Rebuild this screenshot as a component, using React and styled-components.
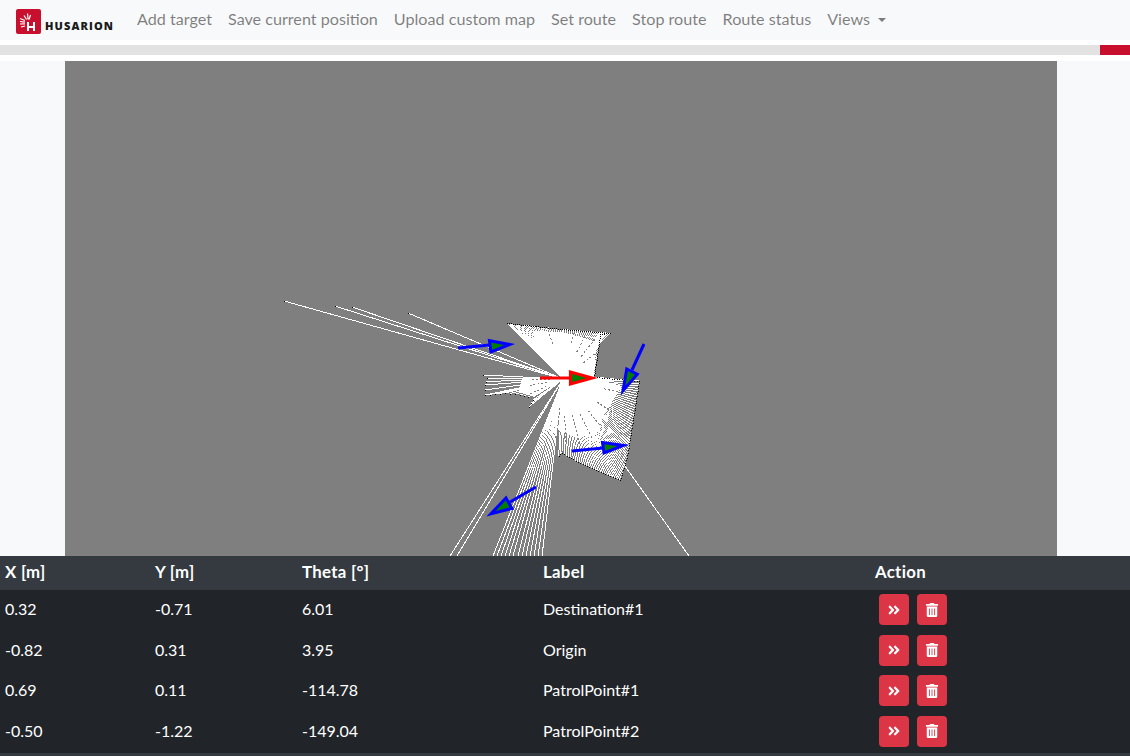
import React from "react";
import styled, { createGlobalStyle } from "styled-components";
import { FaAngleDoubleRight, FaTrashAlt } from "react-icons/fa";

const GlobalStyle = createGlobalStyle`
  html, body {
    margin: 0;
    height: 756px;
    overflow: hidden;
    background: #fff;
    font-family: Lato, "Liberation Sans", sans-serif;
    font-size: 16px;
  }
`;

const Navbar = styled.nav`
  display: flex;
  align-items: center;
  height: 40px;
  padding: 0 8px 2px 16px;
  box-sizing: border-box;
  background: #f8f9fa;
`;
const Brand = styled.a`
  display: flex;
  align-items: flex-end;
  flex: none;
  width: 97px;
  height: 25px;
  margin-right: 16px;
  margin-top: 4px;
`;
const LogoMark = styled.svg`
  flex: none;
  width: 25px;
  height: 25px;
`;
const BrandName = styled.span`
  margin: 0 0 2px 4px;
  font-family: "Open Sans", sans-serif;
  font-weight: 800;
  font-size: 11px;
  line-height: 12px;
  letter-spacing: 1.1px;
  color: #1b1b1b;
`;
const NavItem = styled.a`
  padding: 0 8px;
  font-size: 16.15px;
  line-height: 24px;
  white-space: nowrap;
  color: rgba(0, 0, 0, 0.5);
`;
const Caret = styled.span`
  display: inline-block;
  margin-left: 8px;
  vertical-align: 3px;
  border-top: 4.8px solid;
  border-left: 4.8px solid transparent;
  border-right: 4.8px solid transparent;
`;
const Progress = styled.div`
  display: flex;
  justify-content: flex-end;
  height: 10px;
  margin: 5px 0 6px;
  background: #e2e2e2;
`;
const ProgressValue = styled.div`
  width: 30px;
  background: #c8102e;
`;
const MapArea = styled.div`
  display: flex;
  justify-content: center;
  padding-right: 8px;
  background: #f8f9fa;
`;
const MapCanvas = styled.svg`
  display: block;
  width: 992px;
  height: 495px;
  background: #7f7f7f;
`;
const TableWrap = styled.div`
  height: 200px;
  background: #343a40;
`;
const Table = styled.table`
  width: 1130px;
  table-layout: fixed;
  border-collapse: collapse;
  color: #fff;
`;
const HeadCell = styled.th`
  height: 34px;
  padding: 0 5px 4px;
  box-sizing: border-box;
  text-align: left;
  font-size: 16.8px;
  font-weight: 700;
  letter-spacing: 0.3px;
  background: #343a40;
`;
const Row = styled.tr`
  background: #212529;
`;
const Cell = styled.td`
  height: 40.67px;
  padding: 7px 5px 0;
  box-sizing: border-box;
  vertical-align: top;
  line-height: 24px;
`;
const Actions = styled.div`
  display: flex;
  gap: 8px;
  margin: -3px 0 0 4px;
`;
const RedButton = styled.button`
  display: flex;
  align-items: center;
  justify-content: center;
  width: 30px;
  height: 31px;
  padding: 0;
  border: 0;
  border-radius: 4px;
  background: #dc3545;
  color: #fff;
  font-size: 14px;
`;

const ORIGIN = [563, 379];

// outline of what the scan has reached, walked clockwise
const TOP_OUTLINE = [
  [507, 323], [562, 329], [610, 333], [600, 334], [598, 350], [594, 377],
];
const RIGHT_OUTLINE = [
  [594, 377], [639, 381], [633, 420], [627, 458], [620, 480], [603, 473],
  [578, 462], [562, 453], [557, 457],
];
const LEFT_OUTLINE = [
  [483, 375], [487, 378], [485, 385], [485, 395], [505, 393], [520, 395],
  [528, 397], [533, 400], [527, 410],
];
const LONG_RAYS = [
  [284, 301], [335, 306], [352, 307], [408, 313], [689, 556],
  [450, 556], [457, 556],
  [493, 556], [497, 556], [501, 556], [505, 556], [509, 556], [513, 556],
  [518, 556], [522, 556], [526, 556], [530, 556], [534, 556], [538, 556], [542, 556],
];
const SOLID_AREAS = [
  "563,379 532,331 562,332 585,338 596,345 594,379",
  "563,379 596,379 622,386 612,402 598,425 578,438 558,430",
  "563,379 522,378 519,392 534,397",
];
// missed beams: dotted grey lines that cut through the white, from the given
// share of the way out to the end point
const MISSED_BEAMS = [
  { to: [548, 329], from: 0.7 }, { to: [574, 331], from: 0.75 }, { to: [586, 334], from: 0.6 },
  { to: [596, 338], from: 0.55 }, { to: [597, 352], from: 0.6 },
  { to: [530, 379], from: 0.4 }, { to: [528, 386], from: 0.45 }, { to: [530, 394], from: 0.5 },
  { to: [618, 392], from: 0.75 }, { to: [612, 412], from: 0.7 }, { to: [602, 428], from: 0.65 },
  { to: [592, 438], from: 0.6 }, { to: [580, 444], from: 0.55 }, { to: [566, 446], from: 0.55 },
  { to: [556, 444], from: 0.45 },
];

function sampleOutline(points, step) {
  const out = [];
  for (let i = 0; i < points.length - 1; i++) {
    const [x1, y1] = points[i];
    const [x2, y2] = points[i + 1];
    const n = Math.max(1, Math.round(Math.hypot(x2 - x1, y2 - y1) / step));
    for (let k = 0; k < n; k++) {
      out.push([x1 + ((x2 - x1) * k) / n, y1 + ((y2 - y1) * k) / n]);
    }
  }
  return out;
}

const ENDS = [
  ...sampleOutline(TOP_OUTLINE, 2),
  ...sampleOutline(RIGHT_OUTLINE, 2.5),
  ...sampleOutline(LEFT_OUTLINE, 4.5),
];

// heads are given by their outer corners, the stroke sits inside them
function insetHead(head) {
  const pts = head.split(" ").map((p) => p.split(",").map(Number));
  const cx = (pts[0][0] + pts[1][0] + pts[2][0]) / 3;
  const cy = (pts[0][1] + pts[1][1] + pts[2][1]) / 3;
  return pts.map(([x, y]) => `${cx + (x - cx) * 0.75},${cy + (y - cy) * 0.75}`).join(" ");
}

const ARROWS = [
  { shaft: "458,348 490,345", head: "487,339 489,354 514,344", color: "#0000ff" },
  { shaft: "540,378 572,378", head: "568,370 568,386 597,378", color: "#ff0000" },
  { shaft: "644,344 632,370", head: "626,366 640,373 621,395", color: "#0000ff" },
  { shaft: "572,451 603,448", head: "600,441 602,455 628,445", color: "#0000ff" },
  { shaft: "536,487 510,502", head: "507,495 515,509 487,516", color: "#0000ff" },
];

function ScanMap() {
  return (
    <MapCanvas viewBox="65 61 992 495">
      <g shapeRendering="crispEdges" stroke="#fff" strokeWidth="1">
        {[...ENDS, ...LONG_RAYS].map(([x, y], i) => (
          <line key={i} x1={ORIGIN[0]} y1={ORIGIN[1]} x2={x} y2={y} />
        ))}
      </g>
      <g shapeRendering="crispEdges" fill="#fff">
        {SOLID_AREAS.map((points) => (
          <polygon key={points} points={points} />
        ))}
      </g>
      <g shapeRendering="crispEdges" stroke="#7f7f7f" strokeWidth="1" strokeDasharray="2 2">
        {MISSED_BEAMS.map(({ to: [x, y], from }) => (
          <line
            key={`${x},${y}`}
            x1={ORIGIN[0] + (x - ORIGIN[0]) * from}
            y1={ORIGIN[1] + (y - ORIGIN[1]) * from}
            x2={x}
            y2={y}
          />
        ))}
      </g>
      <g shapeRendering="crispEdges" fill="#000">
        {[...ENDS, ...LONG_RAYS.slice(0, 4)].map(([x, y], i) => (
          <rect key={i} x={Math.round(x)} y={Math.round(y)} width="1" height="1" />
        ))}
      </g>
      {ARROWS.map((a) => (
        <g key={a.head} stroke={a.color} strokeWidth="3" strokeMiterlimit="10">
          <polyline points={a.shaft} fill="none" />
          <polygon points={insetHead(a.head)} fill="#008000" />
        </g>
      ))}
    </MapCanvas>
  );
}

function Logo() {
  return (
    <LogoMark viewBox="0 0 25 25">
      <rect width="25" height="25" rx="2" fill="#c8102e" />
      <path fill="#fff" d="M11 13h2v4h4v-4h2v9h-2v-3h-4v3h-2z" />
      <g stroke="#fff" strokeWidth="1.2">
        <path d="M4 9.5l5 2M4 12.5l5 .6M4 15l5-.2M5 18l4-1M8 6.5l2.6 4M11.5 4.5l.6 6M14.5 6l-1.5 4.5" />
      </g>
    </LogoMark>
  );
}

const NAV_ITEMS = [
  "Add target",
  "Save current position",
  "Upload custom map",
  "Set route",
  "Stop route",
  "Route status",
];

const POINTS = [
  { x: "0.32", y: "-0.71", theta: "6.01", label: "Destination#1" },
  { x: "-0.82", y: "0.31", theta: "3.95", label: "Origin" },
  { x: "0.69", y: "0.11", theta: "-114.78", label: "PatrolPoint#1" },
  { x: "-0.50", y: "-1.22", theta: "-149.04", label: "PatrolPoint#2" },
];

export default function App() {
  return (
    <>
      <GlobalStyle />
      <Navbar>
        <Brand>
          <Logo />
          <BrandName>HUSARION</BrandName>
        </Brand>
        {NAV_ITEMS.map((item) => (
          <NavItem key={item}>{item}</NavItem>
        ))}
        <NavItem>
          Views
          <Caret />
        </NavItem>
      </Navbar>
      <Progress>
        <ProgressValue />
      </Progress>
      <MapArea>
        <ScanMap />
      </MapArea>
      <TableWrap>
        <Table>
          <colgroup>
            <col width="150" />
            <col width="147" />
            <col width="241" />
            <col width="332" />
            <col width="260" />
          </colgroup>
          <thead>
            <tr>
              <HeadCell>X [m]</HeadCell>
              <HeadCell>Y [m]</HeadCell>
              <HeadCell>Theta [°]</HeadCell>
              <HeadCell>Label</HeadCell>
              <HeadCell>Action</HeadCell>
            </tr>
          </thead>
          <tbody>
            {POINTS.map((p) => (
              <Row key={p.label}>
                <Cell>{p.x}</Cell>
                <Cell>{p.y}</Cell>
                <Cell>{p.theta}</Cell>
                <Cell>{p.label}</Cell>
                <Cell>
                  <Actions>
                    <RedButton>
                      <FaAngleDoubleRight />
                    </RedButton>
                    <RedButton>
                      <FaTrashAlt />
                    </RedButton>
                  </Actions>
                </Cell>
              </Row>
            ))}
          </tbody>
        </Table>
      </TableWrap>
    </>
  );
}
